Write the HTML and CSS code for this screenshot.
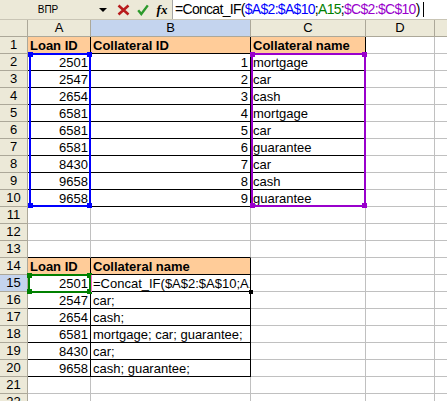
FILE: index.html
```html
<!DOCTYPE html>
<html lang="en">
<head>
  <meta charset="UTF-8">
  <title>Concat_IF</title>
  <link rel="stylesheet" href="styles.css">
</head>
<body>

  <!-- Formula bar -->
  <div class="fbar">
    <div class="namebox">ВПР</div>
    <div class="tool arrow"><span class="tri"></span></div>
    <div class="tool cancel">
      <svg width="13" height="12" viewBox="0 0 13 12"><path d="M1.5 1.5 L11.5 10.5 M11.5 1.5 L1.5 10.5" stroke="#b81c1c" stroke-width="2.6" fill="none"/></svg>
    </div>
    <div class="tool ok">
      <svg width="12" height="12" viewBox="0 0 12 12"><path d="M1.2 6.2 L4.3 10 L10.8 1.4" stroke="#2c9a2c" stroke-width="2.4" fill="none"/></svg>
    </div>
    <div class="tool fx">fx</div>
    <div class="input">=Concat_IF(<span class="ref-a">$A$2:$A$10</span>;<span class="ref-b">A15</span>;<span class="ref-c">$C$2:$C$10</span>)<span class="caret"></span></div>
  </div>

  <!-- Sheet -->
  <div class="sheet">
    <div class="hd"></div><div class="hd">A</div><div class="hd sel">B</div><div class="hd">C</div><div class="hd">D</div><div class="hd"></div>

    <div class="rh">1</div><div class="c t th">Loan ID</div><div class="c t th">Collateral ID</div><div class="c t th">Collateral name</div><div class="c"></div><div class="c"></div>
    <div class="rh">2</div><div class="c t n">2501</div><div class="c t n">1</div><div class="c t">mortgage</div><div class="c"></div><div class="c"></div>
    <div class="rh">3</div><div class="c t n">2547</div><div class="c t n">2</div><div class="c t">car</div><div class="c"></div><div class="c"></div>
    <div class="rh">4</div><div class="c t n">2654</div><div class="c t n">3</div><div class="c t">cash</div><div class="c"></div><div class="c"></div>
    <div class="rh">5</div><div class="c t n">6581</div><div class="c t n">4</div><div class="c t">mortgage</div><div class="c"></div><div class="c"></div>
    <div class="rh">6</div><div class="c t n">6581</div><div class="c t n">5</div><div class="c t">car</div><div class="c"></div><div class="c"></div>
    <div class="rh">7</div><div class="c t n">6581</div><div class="c t n">6</div><div class="c t">guarantee</div><div class="c"></div><div class="c"></div>
    <div class="rh">8</div><div class="c t n">8430</div><div class="c t n">7</div><div class="c t">car</div><div class="c"></div><div class="c"></div>
    <div class="rh">9</div><div class="c t n">9658</div><div class="c t n">8</div><div class="c t">cash</div><div class="c"></div><div class="c"></div>
    <div class="rh">10</div><div class="c t n">9658</div><div class="c t n">9</div><div class="c t">guarantee</div><div class="c"></div><div class="c"></div>
    <div class="rh">11</div><div class="c"></div><div class="c"></div><div class="c"></div><div class="c"></div><div class="c"></div>
    <div class="rh">12</div><div class="c"></div><div class="c"></div><div class="c"></div><div class="c"></div><div class="c"></div>
    <div class="rh">13</div><div class="c tb"></div><div class="c tb"></div><div class="c"></div><div class="c"></div><div class="c"></div>
    <div class="rh">14</div><div class="c t th">Loan ID</div><div class="c t th">Collateral name</div><div class="c"></div><div class="c"></div><div class="c"></div>
    <div class="rh sel">15</div><div class="c t n">2501</div><div class="c t">=Concat_IF($A$2:$A$10;A15;$C$2:$C$10)</div><div class="c"></div><div class="c"></div><div class="c"></div>
    <div class="rh">16</div><div class="c t n">2547</div><div class="c t">car;</div><div class="c"></div><div class="c"></div><div class="c"></div>
    <div class="rh">17</div><div class="c t n">2654</div><div class="c t">cash;</div><div class="c"></div><div class="c"></div><div class="c"></div>
    <div class="rh">18</div><div class="c t n">6581</div><div class="c t">mortgage; car; guarantee;</div><div class="c"></div><div class="c"></div><div class="c"></div>
    <div class="rh">19</div><div class="c t n">8430</div><div class="c t">car;</div><div class="c"></div><div class="c"></div><div class="c"></div>
    <div class="rh">20</div><div class="c t n">9658</div><div class="c t">cash; guarantee;</div><div class="c"></div><div class="c"></div><div class="c"></div>
    <div class="rh">21</div><div class="c"></div><div class="c"></div><div class="c"></div><div class="c"></div><div class="c"></div>
    <div class="rh">22</div><div class="c"></div><div class="c"></div><div class="c"></div><div class="c"></div><div class="c"></div>

    <!-- reference highlights drawn over the cells -->
    <div class="range range-a"><span class="h tl"></span><span class="h tr"></span><span class="h bl"></span><span class="h br"></span></div>
    <div class="range range-c"><span class="h tl"></span><span class="h tr"></span><span class="h bl"></span><span class="h br"></span></div>
    <div class="range range-b"><span class="h tl"></span><span class="h tr"></span><span class="h bl"></span><span class="h br"></span></div>
    <div class="edit-left"></div>
    <div class="edit-handle"></div>
  </div>

</body>
</html>
```

FILE: styles.css
```css
body {
  margin: 0;
  width: 447px;
  height: 401px;
  overflow: hidden;
  background: #fff;
  font-family: "Liberation Sans", Arial, sans-serif;
  font-size: 13px;
  color: #000;
}

/* formula bar */
.fbar {
  display: flex;
  height: 20px;
  box-sizing: border-box;
  background: #ece9d8;
  border-bottom: 1px solid #c9c5b5;
}

.namebox {
  width: 96px;
  text-align: center;
  font-size: 10px;
  line-height: 19px;
}

.tool {
  display: flex;
  align-items: center;
  justify-content: center;
  height: 19px;
}

.arrow {
  width: 14px;
  margin-right: 4px;
}

.tri {
  width: 0;
  height: 0;
  border-left: 4px solid transparent;
  border-right: 4px solid transparent;
  border-top: 4px solid #000;
}

.cancel, .ok {
  width: 19px;
}

.fx {
  width: 20px;
  font-family: "Liberation Serif", serif;
  font-style: italic;
  font-weight: bold;
  font-size: 13px;
}

.input {
  flex: 1;
  background: #fff;
  border-left: 1px solid #a5a5a5;
  padding-left: 2px;
  font-size: 14px;
  letter-spacing: -0.7px;
  line-height: 19px;
  white-space: nowrap;
}

.ref-a { color: #0000ff; }
.ref-b { color: #008000; }
.ref-c { color: #9900cc; }

.caret {
  display: inline-block;
  width: 1px;
  height: 15px;
  background: #000;
  margin-left: 3px;
  vertical-align: -3px;
}

/* sheet grid */
.sheet {
  position: relative;
  display: grid;
  grid-template-columns: 28px 63px 160px 115px 69px 69px;
  grid-auto-rows: 17px;
}

.hd, .rh {
  background: #ece9d8;
  border-right: 1px solid #aca899;
  border-bottom: 1px solid #aca899;
  text-align: center;
  line-height: 16px;
}

.hd.sel, .rh.sel {
  background: #c4d4ee;
}

.c {
  border-right: 1px solid #c0c0c0;
  border-bottom: 1px solid #c0c0c0;
  padding: 1px 2px 0;
  line-height: 15px;
  white-space: nowrap;
  overflow: hidden;
}

.t {
  border-right-color: #000;
  border-bottom-color: #000;
}

.tb {
  border-bottom-color: #000;
}

.th {
  background: #ffcc99;
  font-weight: bold;
}

.n {
  text-align: right;
}

/* range outlines */
.range {
  position: absolute;
  box-sizing: border-box;
  border: 2px solid currentColor;
}

.range-a {
  color: #0000ff;
  left: 29px;
  top: 33px;
  width: 62px;
  height: 154px;
}

.range-c {
  color: #9900cc;
  left: 251px;
  top: 33px;
  width: 115px;
  height: 154px;
}

.range-b {
  color: #008000;
  left: 28px;
  top: 254px;
  width: 63px;
  height: 19px;
}

.h {
  position: absolute;
  width: 5px;
  height: 5px;
  background: currentColor;
}

.tl { left: -3px; top: -3px; }
.tr { right: -3px; top: -3px; }
.bl { left: -3px; bottom: -3px; }
.br { right: -3px; bottom: -3px; }

.edit-left {
  position: absolute;
  left: 91px;
  top: 255px;
  width: 1px;
  height: 17px;
  background: #ff66cc;
}

.edit-handle {
  position: absolute;
  left: 249px;
  top: 270px;
  width: 4px;
  height: 4px;
  background: #000;
}
```
